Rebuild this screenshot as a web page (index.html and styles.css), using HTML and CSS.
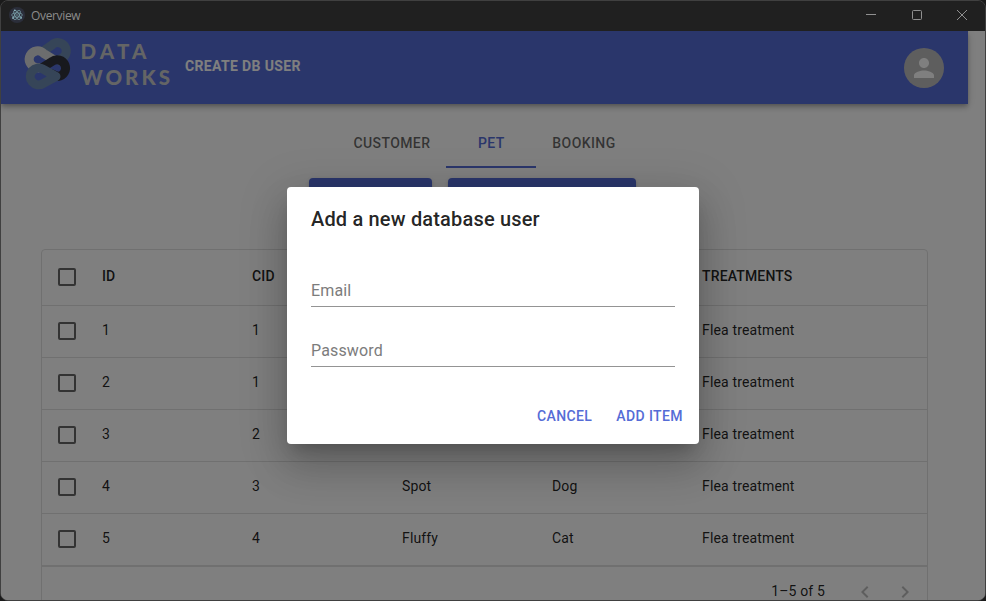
FILE: index.html
```html
<!DOCTYPE html>
<html lang="en">
<head>
<meta charset="utf-8">
<title>Overview</title>
<link rel="stylesheet" href="styles.css">
</head>
<body>
<div class="window">
  <header class="titlebar">
    <svg class="app-icon" width="16" height="16" viewBox="0 0 16 16"><circle cx="8" cy="8" r="8" fill="#2b2e3a"/><g fill="none" stroke="#83aeb8" stroke-width=".65"><ellipse cx="8" cy="8" rx="5.3" ry="2.1"/><ellipse cx="8" cy="8" rx="5.3" ry="2.1" transform="rotate(60 8 8)"/><ellipse cx="8" cy="8" rx="5.3" ry="2.1" transform="rotate(120 8 8)"/></g><g fill="#8bb4be"><circle cx="8" cy="8" r=".7"/><circle cx="4" cy="11" r=".9"/><circle cx="12.2" cy="10.8" r=".9"/><circle cx="5.8" cy="3.3" r=".9"/></g></svg>
    <span class="window-title">Overview</span>
    <div class="controls">
      <svg width="12" height="12" viewBox="0 0 12 12"><path d="M1 5.5h10"/></svg>
      <svg width="12" height="12" viewBox="0 0 12 12"><rect x="1.5" y="1.5" width="9" height="9" rx="1"/></svg>
      <svg width="12" height="12" viewBox="0 0 12 12"><path d="M1 1l10 10M11 1L1 11"/></svg>
    </div>
  </header>
  <div class="content">
    <div class="appbar">
      <svg class="logo" width="150" height="54" viewBox="22 37 150 54">
        <g fill="none" stroke-width="9" stroke-linejoin="round">
          <path stroke="#6c8ab0" d="M42 52 L52 45 A8.4 8.4 0 1 1 60.5 59 L56 62"/>
          <path stroke="#d9dadd" d="M56 61 L43.5 53.3 A8.4 8.4 0 1 0 36 67.5 L40 68"/>
          <path stroke="#30323d" d="M40 69 L52 61.5 A8.4 8.4 0 1 1 58 76.5 L50 73"/>
          <path stroke="#6c8ab0" d="M56 76.5 L43 69.2 A8.4 8.4 0 1 0 43 83.6 Z"/>
        </g>
        <g class="logo-text"><text x="80.5" y="59" textLength="66">DATA</text><text x="81" y="85" textLength="89">WORKS</text></g>
      </svg>
      <span class="appbar-link">CREATE DB USER</span>
      <div class="avatar"><svg width="30" height="30" viewBox="0 0 24 24"><path fill="#fff" d="M12 12c2.21 0 4-1.79 4-4s-1.79-4-4-4-4 1.79-4 4 1.79 4 4 4zm0 2c-2.67 0-8 1.34-8 4v2h16v-2c0-2.66-5.33-4-8-4z"/></svg></div>
    </div>
    <nav class="tabs"><span class="tab">CUSTOMER</span><span class="tab active">PET</span><span class="tab">BOOKING</span></nav>
    <div class="toolbar"><div class="action add"></div><div class="action remove"></div></div>
    <div class="table">
      <div class="row head"><i class="check"></i><span>ID</span><span>CID</span><span></span><span></span><span>TREATMENTS</span></div>
      <div class="row"><i class="check"></i><span>1</span><span>1</span><span></span><span></span><span>Flea treatment</span></div>
      <div class="row"><i class="check"></i><span>2</span><span>1</span><span></span><span></span><span>Flea treatment</span></div>
      <div class="row"><i class="check"></i><span>3</span><span>2</span><span></span><span></span><span>Flea treatment</span></div>
      <div class="row"><i class="check"></i><span>4</span><span>3</span><span>Spot</span><span>Dog</span><span>Flea treatment</span></div>
      <div class="row"><i class="check"></i><span>5</span><span>4</span><span>Fluffy</span><span>Cat</span><span>Flea treatment</span></div>
      <div class="pager"><span>1–5 of 5</span>
        <svg width="24" height="24" viewBox="0 0 24 24"><path d="M15.41 16.59 10.83 12l4.58-4.59L14 6l-6 6 6 6z"/></svg>
        <svg width="24" height="24" viewBox="0 0 24 24"><path d="M8.59 16.59 13.17 12 8.59 7.41 10 6l6 6-6 6z"/></svg>
      </div>
    </div>
    <div class="backdrop">
      <div class="dialog">
        <h2>Add a new database user</h2>
        <div class="fields"><div class="field">Email</div><div class="field">Password</div></div>
        <div class="buttons"><span class="button">CANCEL</span><span class="button">ADD ITEM</span></div>
      </div>
    </div>
  </div>
</div>
</body>
</html>
```
FILE: styles.css
```css
* { box-sizing: border-box; }
body { margin: 0; background: #1a1a1a; font-family: Roboto, sans-serif; font-size: 14px; color: rgba(0,0,0,.87); overflow: hidden; }
.window { width: 986px; height: 601px; border: 1px solid #404040; border-radius: 8px; overflow: hidden; display: flex; flex-direction: column; background: #202020; }
.titlebar { height: 30px; flex: none; display: flex; align-items: center; padding: 0 17px 2px 8px; background: #202020; }
.window-title { margin: 1px 0 0 6px; font: 12px "Open Sans", sans-serif; color: #8b8b8b; letter-spacing: -.35px; }
.controls { margin-left: auto; display: flex; gap: 33.5px; }
.controls svg { fill: none; stroke: #909090; stroke-width: 1; }
.content { position: relative; flex: 1; min-height: 0; overflow: hidden; background: #fff; }
.appbar { width: 967px; height: 73px; display: flex; align-items: center; padding: 0 24px 0 21px; background: #556cd6; box-shadow: 0 2px 4px -1px rgba(0,0,0,.2), 0 4px 5px rgba(0,0,0,.14), 0 1px 10px rgba(0,0,0,.12); }
.logo { margin-top: -7px; }
.logo-text { font: 900 20.5px Lato, sans-serif; fill: #c8cacb; }
.appbar-link { margin: -3px 0 0 13px; font-size: 14px; font-weight: 700; letter-spacing: .36px; color: #fff; }
.avatar { width: 40px; height: 40px; margin-left: auto; border-radius: 50%; background: #bdbdbd; display: flex; align-items: center; justify-content: center; }
.tabs { width: 967px; height: 48px; margin-top: 16px; display: flex; justify-content: center; }
.tab { min-width: 90px; padding: 0 16px; line-height: 47px; text-align: center; font-weight: 500; letter-spacing: .4px; color: rgba(0,0,0,.6); }
.tab.active { color: #556cd6; border-bottom: 2px solid #556cd6; }
.toolbar { display: flex; gap: 16px; margin: 10px 0 0 308px; }
.action { height: 37px; border-radius: 4px; background: #556cd6; box-shadow: 0 3px 1px -2px rgba(0,0,0,.2), 0 2px 2px rgba(0,0,0,.14), 0 1px 5px rgba(0,0,0,.12); }
.add { width: 123px; }
.remove { width: 188px; }
.table { width: 887px; height: 402px; margin: 34px 0 0 40px; border: 1px solid #e0e0e0; border-radius: 4px; letter-spacing: .15px; }
.row { height: 52px; display: grid; grid-template-columns: 60px repeat(4, 150px) 1fr; border-bottom: 1px solid #e0e0e0; line-height: 49px; }
.head { height: 56px; line-height: 53px; font-weight: 500; }
.check { width: 18px; height: 18px; margin: 0 0 2px 16px; border: 2px solid #666; border-radius: 2px; align-self: center; }
.pager { height: 51px; border-top: 1px solid #e0e0e0; display: flex; align-items: center; padding-right: 10px; }
.pager span { margin: -3px 28px 0 auto; }
.pager svg + svg { margin-left: 16px; }
.pager svg { fill: rgba(0,0,0,.26); }
.backdrop { position: absolute; inset: 0; background: rgba(0,0,0,.5); display: flex; align-items: center; justify-content: center; }
.dialog { width: 412px; height: 257px; border-radius: 4px; background: #fff; box-shadow: 0 11px 15px -7px rgba(0,0,0,.2), 0 24px 38px 3px rgba(0,0,0,.14), 0 9px 46px 8px rgba(0,0,0,.12); display: flex; flex-direction: column; }
h2 { margin: 0; padding: 16px 24px; font-size: 20px; font-weight: 500; line-height: 32px; letter-spacing: .17px; }
.fields { padding: 24px 24px 0; display: grid; gap: 28px; }
.field { height: 32px; line-height: 31px; border-bottom: 1px solid #949494; font-size: 16px; color: #7c7c7c; letter-spacing: .15px; }
.buttons { margin-top: auto; padding: 8px 8px 10px; display: flex; justify-content: flex-end; gap: 8px; }
.button { padding: 6px 8px; line-height: 24.5px; font-weight: 500; letter-spacing: .4px; color: #556cd6; }
```
